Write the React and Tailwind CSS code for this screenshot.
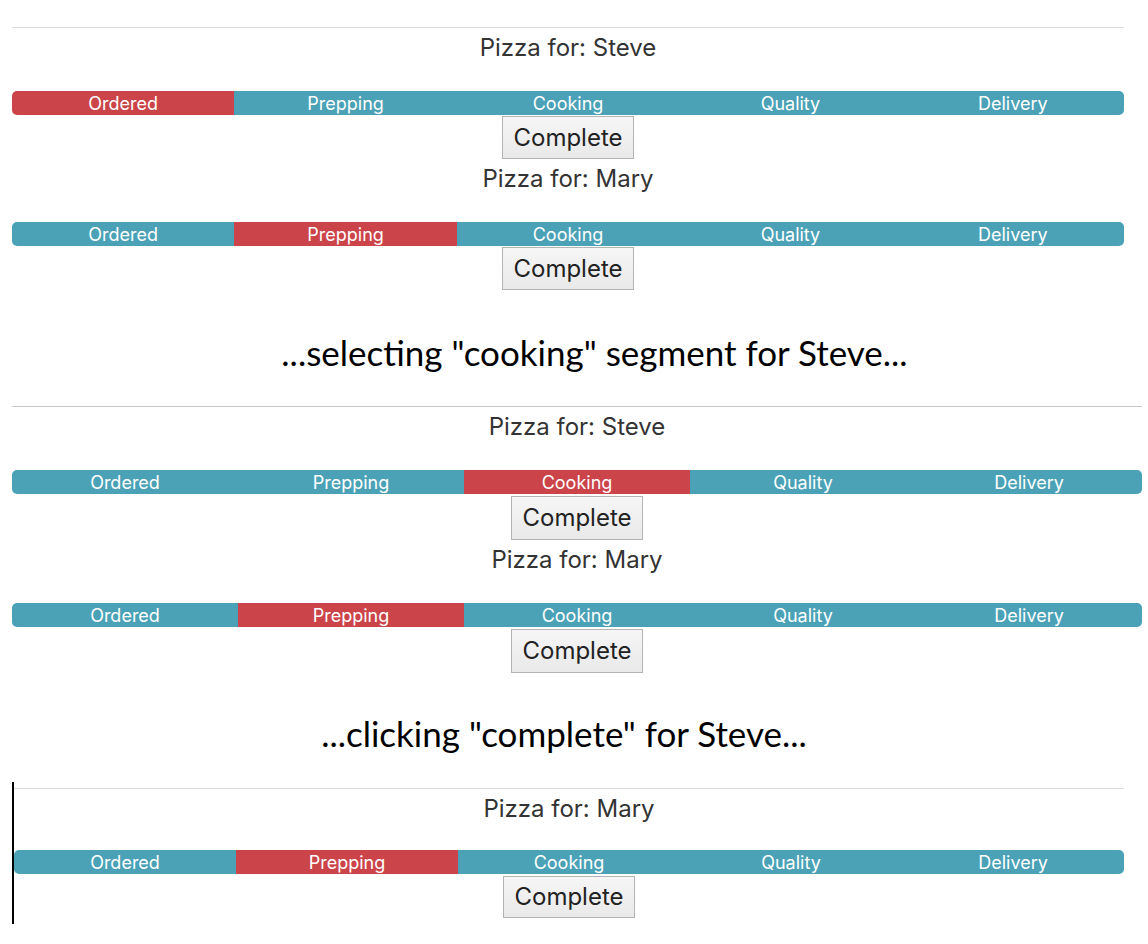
import React from "react";

const STAGES = ["Ordered", "Prepping", "Cooking", "Quality", "Delivery"];

const PizzaRow = ({ name, active, nameGap, barGap, btnGap, btnHeight }) => {
  return (
    <div className="flex flex-col items-center">
      <div className={`${nameGap} h-[30px] leading-[30px] text-[24px] text-[#333]`}>
        Pizza for: {name}
      </div>

      {/* status bar */}
      <div className={`${barGap} w-full h-[24px] flex rounded-[5px] overflow-hidden`}>
        {STAGES.map((stage, i) => (
          <div
            key={stage}
            className={`flex-1 flex items-center justify-center text-[18px] text-white ${
              i === active ? "bg-[#cb444a]" : "bg-[#4ba2b6]"
            }`}
          >
            {stage}
          </div>
        ))}
      </div>

      <button
        className={`${btnGap} ${btnHeight} px-[10px] border border-[#b4b4b4] bg-gradient-to-b from-[#f6f6f6] to-[#e9e9e9] text-[24px] text-[#222]`}
      >
        Complete
      </button>
    </div>
  );
};

const App = () => {
  return (
    <div className="w-[1148px] h-[944px] bg-white overflow-hidden font-['Inter',sans-serif]">
      {/* first screenshot */}
      <div className="pt-[27px] ml-[12px] w-[1112px]">
        <div className="border-t border-[#dcdcdc]">
          <PizzaRow name="Steve" active={0} nameGap="mt-[5px]" barGap="mt-[28px]" btnGap="mt-[1px]" btnHeight="h-[43px]" />
          <PizzaRow name="Mary" active={1} nameGap="mt-[5px]" barGap="mt-[28px]" btnGap="mt-[1px]" btnHeight="h-[43px]" />
        </div>
      </div>

      <div className="mt-[38px] h-[48px] leading-[48px] pl-[41px] text-center text-[35px] text-black font-['Lato',sans-serif]">
        ...selecting "cooking" segment for Steve...
      </div>

      {/* second screenshot */}
      <div className="mt-[30px] ml-[12px] w-[1130px]">
        <div className="border-t border-[#c8c8c8]">
          <PizzaRow name="Steve" active={2} nameGap="mt-[5px]" barGap="mt-[28px]" btnGap="mt-[2px]" btnHeight="h-[44px]" />
          <PizzaRow name="Mary" active={1} nameGap="mt-[5px]" barGap="mt-[28px]" btnGap="mt-[2px]" btnHeight="h-[44px]" />
        </div>
      </div>

      <div className="mt-[36px] h-[48px] leading-[48px] pr-[20px] text-center text-[35px] text-black font-['Lato',sans-serif]">
        ...clicking "complete" for Steve...
      </div>

      {/* third screenshot */}
      <div className="mt-[25px] ml-[12px] h-[142px] border-l-2 border-black">
        <div className="pt-[6px] w-[1110px]">
          <div className="border-t border-[#dcdcdc]">
            <PizzaRow name="Mary" active={1} nameGap="mt-[5px]" barGap="mt-[26px]" btnGap="mt-[2px]" btnHeight="h-[42px]" />
          </div>
        </div>
      </div>
    </div>
  );
};

export default App;
